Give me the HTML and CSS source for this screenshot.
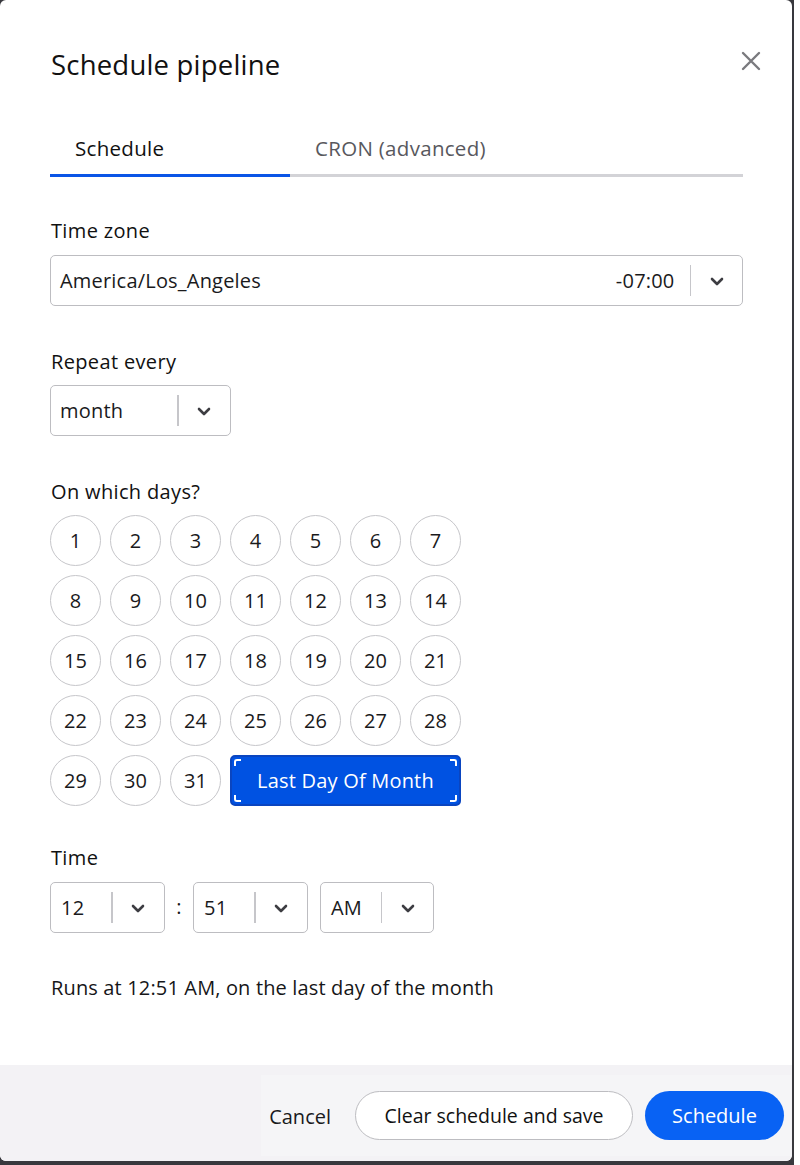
FILE: index.html
```html
<!DOCTYPE html>
<html>
<head>
<meta charset="utf-8">
<link rel="stylesheet" href="styles.css">
</head>
<body>
<div class="backdrop">
  <div class="modal">
    <div class="content">
      <div class="header">
        <h1 class="title">Schedule pipeline</h1>
        <button class="close" aria-label="Close">
          <svg width="20" height="20" viewBox="0 0 20 20"><path d="M2 2 L18 18 M18 2 L2 18" stroke="#7a7a7e" stroke-width="2.4" stroke-linecap="round"/></svg>
        </button>
      </div>
      <div class="tabs">
        <div class="tab active">Schedule</div>
        <div class="tab">CRON (advanced)</div>
      </div>

      <div class="label first">Time zone</div>
      <div class="select wide">
        <div class="value grow">America/Los_Angeles<span class="offset">-07:00</span></div>
        <div class="sep"></div>
        <div class="chev"><svg width="14" height="9" viewBox="0 0 14 9"><path d="M2 2 L7 7 L12 2" fill="none" stroke="#3d3d42" stroke-width="2.6" stroke-linecap="round" stroke-linejoin="round"/></svg></div>
      </div>

      <div class="label">Repeat every</div>
      <div class="select">
        <div class="value repeat">month</div>
        <div class="sep"></div>
        <div class="chev"><svg width="14" height="9" viewBox="0 0 14 9"><path d="M2 2 L7 7 L12 2" fill="none" stroke="#3d3d42" stroke-width="2.6" stroke-linecap="round" stroke-linejoin="round"/></svg></div>
      </div>

      <div class="label">On which days?</div>
      <div class="days">
        <div class="day">1</div><div class="day">2</div><div class="day">3</div><div class="day">4</div><div class="day">5</div><div class="day">6</div><div class="day">7</div>
        <div class="day">8</div><div class="day">9</div><div class="day">10</div><div class="day">11</div><div class="day">12</div><div class="day">13</div><div class="day">14</div>
        <div class="day">15</div><div class="day">16</div><div class="day">17</div><div class="day">18</div><div class="day">19</div><div class="day">20</div><div class="day">21</div>
        <div class="day">22</div><div class="day">23</div><div class="day">24</div><div class="day">25</div><div class="day">26</div><div class="day">27</div><div class="day">28</div>
        <div class="day">29</div><div class="day">30</div><div class="day">31</div>
        <div class="lastday">Last Day Of Month
          <span class="mark tl"></span><span class="mark tr"></span><span class="mark bl"></span><span class="mark br"></span>
        </div>
      </div>

      <div class="label time-label">Time</div>
      <div class="time-row">
        <div class="select">
          <div class="value time">12</div>
          <div class="sep"></div>
          <div class="chev"><svg width="14" height="9" viewBox="0 0 14 9"><path d="M2 2 L7 7 L12 2" fill="none" stroke="#3d3d42" stroke-width="2.6" stroke-linecap="round" stroke-linejoin="round"/></svg></div>
        </div>
        <span class="colon">:</span>
        <div class="select">
          <div class="value time">51</div>
          <div class="sep"></div>
          <div class="chev"><svg width="14" height="9" viewBox="0 0 14 9"><path d="M2 2 L7 7 L12 2" fill="none" stroke="#3d3d42" stroke-width="2.6" stroke-linecap="round" stroke-linejoin="round"/></svg></div>
        </div>
        <div class="select ampm">
          <div class="value time">AM</div>
          <div class="sep"></div>
          <div class="chev"><svg width="14" height="9" viewBox="0 0 14 9"><path d="M2 2 L7 7 L12 2" fill="none" stroke="#3d3d42" stroke-width="2.6" stroke-linecap="round" stroke-linejoin="round"/></svg></div>
        </div>
      </div>

      <p class="summary">Runs at 12:51 AM, on the last day of the month</p>
    </div>

    <div class="footer">
      <div class="actions">
        <button class="btn-link">Cancel</button>
        <button class="btn-outline">Clear schedule and save</button>
        <button class="btn-primary">Schedule</button>
      </div>
    </div>
  </div>
</div>
</body>
</html>
```

FILE: styles.css
```css
* { box-sizing: border-box; }

html, body {
  margin: 0;
  padding: 0;
  background: #ffffff;
}

body {
  font-family: "Open Sans", "Noto Sans", sans-serif;
  color: #161618;
}

.backdrop {
  width: 794px;
  height: 1165px;
  background: #38383d;
}

.modal {
  width: 792px;
  height: 1161px;
  background: #ffffff;
  border-radius: 6px;
  display: flex;
  flex-direction: column;
  overflow: hidden;
}

.content {
  padding: 0 49px 0 50px;
}

.header {
  display: flex;
  justify-content: space-between;
  align-items: center;
  padding-top: 49px;
  margin-right: -18px;
}

.title {
  margin: 0 0 0 1px;
  font-size: 27.5px;
  line-height: 32px;
  font-weight: 400;
  color: #111;
  letter-spacing: 0.2px;
}

.close {
  border: none;
  background: none;
  padding: 0;
  width: 20px;
  height: 20px;
  margin-top: -9px;
  display: flex;
}

.tabs {
  display: flex;
  margin-top: 55px;
  border-bottom: 3px solid #d3d3d7;
}

.tab {
  width: 240px;
  padding: 0 0 14px 25px;
  font-size: 20.5px;
  line-height: 24px;
  letter-spacing: 0.3px;
  color: #58585d;
  margin-bottom: -3px;
  border-bottom: 3px solid transparent;
}

.tab.active {
  color: #111;
  border-bottom-color: #0a55e6;
}

.label {
  font-size: 20px;
  line-height: 24px;
  letter-spacing: 0.35px;
  margin-top: 44px;
  margin-bottom: 11px;
  padding-left: 1px;
  color: #111;
}

.label.first {
  margin-top: 42px;
  margin-bottom: 12px;
}

.select {
  display: inline-flex;
  align-items: center;
  height: 51px;
  border: 1.5px solid #bdbdc1;
  border-radius: 5px;
  background: #fff;
  font-size: 20px;
  letter-spacing: 0.2px;
  color: #1a1a1c;
}

.select.wide {
  display: flex;
  width: 693px;
}

.value {
  padding-left: 9px;
}

.value.grow {
  flex: 1;
  display: flex;
  justify-content: space-between;
  padding-right: 15px;
}

.value.repeat { width: 126px; }
.value.time { width: 60px; padding-left: 10px; }

.sep {
  width: 1.5px;
  height: 31px;
  background: #c6c6ca;
}

.chev {
  width: 51px;
  display: flex;
  justify-content: center;
  align-items: center;
  padding-top: 1px;
}

.days {
  display: grid;
  grid-template-columns: repeat(7, 51px);
  grid-auto-rows: 51px;
  gap: 9px;
}

.day {
  width: 51px;
  height: 51px;
  border: 1.5px solid #c6c6ca;
  border-radius: 50%;
  display: flex;
  align-items: center;
  justify-content: center;
  font-size: 20px;
  color: #1a1a1c;
  background: #fff;
}

.lastday {
  grid-column: span 4;
  position: relative;
  background: #0052e2;
  border: 2px solid #0a45c0;
  border-radius: 5px;
  color: #fff;
  font-size: 20px;
  letter-spacing: 0.2px;
  display: flex;
  align-items: center;
  justify-content: center;
  padding-bottom: 1px;
}

.mark {
  position: absolute;
  width: 7px;
  height: 7px;
  border-color: #ffffff;
  border-style: solid;
  border-width: 0;
}
.mark.tl { top: 2px; left: 2px; border-top-width: 2px; border-left-width: 2px; border-top-left-radius: 3px; }
.mark.tr { top: 2px; right: 2px; border-top-width: 2px; border-right-width: 2px; border-top-right-radius: 3px; }
.mark.bl { bottom: 2px; left: 2px; border-bottom-width: 2px; border-left-width: 2px; border-bottom-left-radius: 3px; }
.mark.br { bottom: 2px; right: 2px; border-bottom-width: 2px; border-right-width: 2px; border-bottom-right-radius: 3px; }

.label.time-label {
  margin-top: 40px;
  margin-bottom: 12px;
}

.time-row {
  display: flex;
  align-items: center;
}

.time-row .select { width: 115px; }
.time-row .select.ampm { width: 114px; margin-left: 12px; }

.colon {
  width: 28px;
  text-align: center;
  font-size: 20px;
  padding-bottom: 2px;
}

.summary {
  margin: 43px 0 0 1px;
  font-size: 20px;
  line-height: 24px;
  letter-spacing: 0.15px;
  color: #161618;
}

.footer {
  margin-top: auto;
  height: 96px;
  background: #f3f2f5;
  display: flex;
  justify-content: flex-end;
  padding: 10px 1px 5px 0;
}

.actions {
  display: flex;
  align-items: center;
  background: #f5f5f7;
  padding: 0 7px 0 8px;
}

.btn-link {
  border: none;
  background: none;
  font-family: inherit;
  font-size: 20px;
  color: #1a1a1c;
  padding: 0;
  margin-right: 24px;
  margin-top: 2px;
}

.btn-outline {
  height: 49px;
  width: 278px;
  border: 1.5px solid #bdbdc1;
  border-radius: 25px;
  background: #fff;
  font-family: inherit;
  font-size: 19.5px;
  color: #111;
  padding: 0;
}

.btn-primary {
  height: 49px;
  width: 139px;
  margin-left: 12px;
  border: none;
  border-radius: 25px;
  background: #0862f4;
  font-family: inherit;
  font-size: 20px;
  color: #fff;
  padding: 0;
}
```
